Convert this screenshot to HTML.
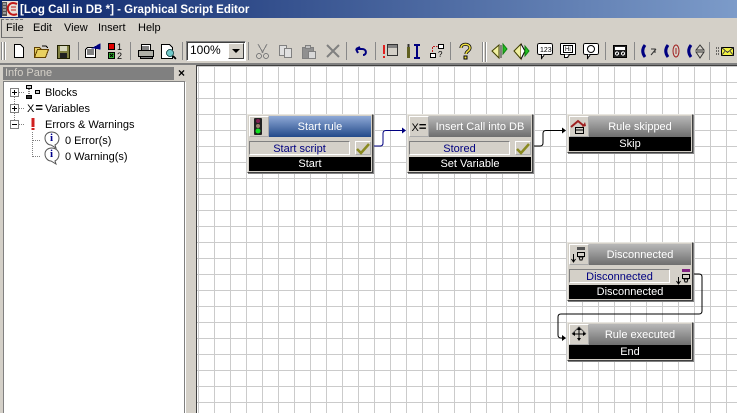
<!DOCTYPE html>
<html><head><meta charset="utf-8"><style>
html,body{margin:0;padding:0}
body{width:737px;height:413px;overflow:hidden;position:relative;background:#d4d0c8;font-family:"Liberation Sans",sans-serif;font-size:11px;color:#000}
.a{position:absolute}
.t{position:absolute;white-space:nowrap;line-height:14px}
.node{position:absolute;width:124px;background:#d4d0c8;border:1px solid;border-color:#e8e6e0 #404040 #404040 #e8e6e0;box-shadow:1px 1px 0 #808080}
.ic{position:absolute;left:1px;top:1px;width:20px;height:21px;background:#d4d0c8;border:1px solid;border-color:#fff #aaa #aaa #fff;box-sizing:border-box}
.hd{position:absolute;left:21px;top:1px;width:102px;height:21px;color:#fff;text-align:center;line-height:22px;background:linear-gradient(#b8b8b8,#6e6e6e)}
.hd.b{background:linear-gradient(#8fa9d6,#234a8a)}
.in{position:absolute;left:1px;top:26px;height:14px;box-sizing:border-box;width:101px;background:#d4d0c8;border:1px solid;border-color:#808080 #fff #fff #808080;color:#000080;text-align:center;line-height:14px}
.ck{position:absolute;left:107px;top:26px;width:16px;height:14px;box-sizing:border-box;border:1px solid;border-color:#fff #aaa #aaa #fff}
.bk{position:absolute;left:1px;width:122px;height:14px;background:#000;color:#fff;text-align:center;line-height:15px}
svg{position:absolute;overflow:visible}
</style></head><body>
<div class="a" style="left:0;top:0;width:737px;height:18px;background:linear-gradient(90deg,#0a246a,#7c9bc9)"></div>
<svg style="left:2px;top:1px" width="16" height="16"><rect width="16" height="16" fill="#e8e0d8"/><rect x="0" y="1" width="5" height="14" fill="#555"/><path d="M1 3h3M1 6h3M1 9h3M1 12h3" stroke="#ddd"/><path d="M15 3C8 0 5 5 6 9c1 4 5 6 9 4" fill="none" stroke="#c01818" stroke-width="2"/><path d="M9 6h5M9 9h5" stroke="#c01818"/></svg>
<div class="t" style="left:20px;top:2px;color:#fff;font-weight:bold;font-size:11.5px;line-height:16px">[Log Call in DB *] - Graphical Script Editor</div>

<div class="t" style="left:6px;top:21px">File</div>
<div class="t" style="left:33px;top:21px">Edit</div>
<div class="t" style="left:64px;top:21px">View</div>
<div class="t" style="left:98px;top:21px">Insert</div>
<div class="t" style="left:138px;top:21px">Help</div>
<div class="a" style="left:1px;top:19px;width:21px;height:17px;border-left:1px solid #666;border-top:1px dashed #777;border-bottom:1px solid #777;border-right:0"></div>

<svg style="left:0;top:40px" width="737" height="24" fill="none" stroke="#000" shape-rendering="crispEdges">
<g stroke="#888"><path d="M1.500 2v18M4.500 2v18M78.500 2v18M130.500 2v18M182.500 2v18M248.500 2v18M346.500 2v18M375.500 2v18M450.500 2v18M605.500 2v18M634.500 2v18M709.500 2v18"/></g>
<path d="M2.500 2v18M5.500 2v18" stroke="#fff"/>
<path d="M482.500 2v20M485.500 2v20" stroke="#888"/>
<path d="M483.500 2v20M486.500 2v20" stroke="#fff"/>
<!-- new -->
<path d="M14.500 4.500h6l3 3v10h-9z" fill="#fff"/>
<!-- open -->
<path d="M34.500 17.500l3-8h11l-3 8zM34.500 17.500V7.500h5l2 2" fill="#e8d060" stroke="#604000"/><path d="M42 6h4l2 2" stroke="#000"/>
<!-- save -->
<rect x="57.500" y="5.500" width="12" height="13" fill="#808040" stroke="#202000"/><rect x="60" y="6" width="7" height="5" fill="#d8d8c0" stroke="none"/><rect x="60" y="13" width="7" height="5" fill="#202020" stroke="none"/>
<!-- props -->
<path d="M87.500 7.500h8v10h-10v-8z" fill="#fff"/><path d="M87 10h7M87 12h7M87 14h7"/><path d="M93 8l7-4v5z" fill="#000080" stroke="#000080"/>
<!-- 1 2 -->
<rect x="108.500" y="3.500" width="6" height="6" fill="#e00000"/><rect x="108.500" y="12.500" width="6" height="6" fill="#30b030"/><path d="M110 14l3 3M113 14l-3 3"/>
<text x="117" y="10" font-size="9" fill="#000" stroke="none" font-family="Liberation Sans">1</text>
<text x="117" y="19" font-size="9" fill="#000" stroke="none" font-family="Liberation Sans">2</text>
<!-- print -->
<path d="M138.500 10.500h15v6h-15z" fill="#b0b0a8"/><path d="M141.500 4.500h9v6h-9z" fill="#fff"/><path d="M140.500 16.500h12v2h-12z" fill="#808080"/><path d="M142 7h7M142 9h7"/>
<!-- preview -->
<path d="M161.500 4.500h8l3 3v11h-11z" fill="#fff"/>
<circle cx="170" cy="13" r="3.500" fill="#70c8c8" stroke="#306060"/><path d="M173 16l3 3" stroke-width="2"/>
<!-- cut etc -->
<g stroke="#808080">
<path d="M258 4l5 9M267 4l-5 9"/><circle cx="259" cy="16" r="2.500"/><circle cx="266" cy="16" r="2.500"/>
<path d="M279.500 5.500h7v10h-7z" fill="#e0e0e0"/><path d="M284.500 8.500h7v9h-7z" fill="#e0e0e0"/>
<path d="M302.500 7.500h11v11h-11z" fill="#909090"/><path d="M305.500 5.500h5v3h-5z" fill="#c0c0c0"/><path d="M308.500 11.500h7v7h-7z" fill="#d8d8d8"/>
</g>
<path d="M327 5l12 12M339 5l-12 12" stroke="#808080" stroke-width="2" shape-rendering="auto"/>
<path d="M356 9h6c5 0 5 6 1 6M356 9l4-2M356 9l2 4" stroke="#000080" stroke-width="2" shape-rendering="auto"/>
<!-- red ! window -->
<rect x="387.500" y="4.500" width="10" height="11" fill="#d4d0c8" stroke="#333"/><rect x="388" y="5" width="9" height="3" fill="#808080" stroke="none"/>
<path d="M384 5v9M384 16v2" stroke="#e02020" stroke-width="2"/>
<!-- tools -->
<path d="M408.500 7v11" stroke="#606020" stroke-width="3"/><path d="M408.500 4v3" stroke="#333" stroke-width="2"/><path d="M417 4v15" stroke="#000080" stroke-width="2"/><path d="M414 5h6M414 18h6" stroke="#000080" stroke-width="2"/>
<!-- tree ? -->
<rect x="438.500" y="4.500" width="5" height="4" fill="#fff"/><rect x="430.500" y="13.500" width="5" height="4" fill="#fff"/><path d="M432.500 12V6.500h5" stroke="#c02020" stroke-dasharray="2 1"/>
<text x="438" y="17" font-size="8" fill="#000" stroke="none" font-family="Liberation Sans">?</text>
<!-- help -->
<path d="M461 8c0-5 9-5 9 0 0 3-4 3-4 6" stroke="#000" stroke-width="3" shape-rendering="auto"/><path d="M461 8c0-5 9-5 9 0 0 3-4 3-4 6" stroke="#f0e040" stroke-width="1.500" shape-rendering="auto"/><rect x="464" y="16" width="3" height="3" fill="#f0e040"/>
<!-- diamonds -->
<g shape-rendering="auto">
<path d="M492 11l7-6v13z" fill="#f0f0a0" stroke="#404000"/><path d="M503 4l4 5-4 5z" fill="#20c020" stroke="#108010"/><path d="M501 5v13" stroke="#333"/>
<path d="M514 11l7-7v15z" fill="#f0f0a0" stroke="#404000"/><path d="M521 4l4 7-4 8" fill="#fff"/><path d="M525 6l4 5-4 5z" fill="#20c020" stroke="#108010"/>
</g>
<g fill="#fff">
<rect x="537.500" y="3.500" width="15" height="11" rx="2"/><path d="M541.500 14.500v4l3-4"/>
<rect x="560.500" y="3.500" width="15" height="11" rx="1"/><path d="M564.500 14.500v3h3l2-3"/><rect x="563.500" y="5.500" width="9" height="7"/>
<rect x="583.500" y="3.500" width="15" height="11" rx="2"/><path d="M587.500 14.500v4l3-4"/><circle cx="591" cy="9" r="3.500" shape-rendering="auto"/>
</g>
<text x="540" y="12" font-size="7" fill="#000" stroke="none" font-family="Liberation Sans">123</text>
<text x="565" y="11" font-size="6" fill="#000" stroke="none" font-family="Liberation Sans">Hi</text>
<!-- tape -->
<rect x="613.500" y="5.500" width="13" height="12" fill="#222"/><rect x="615" y="7" width="10" height="3" fill="#fff" stroke="none"/><circle cx="617" cy="13.500" r="1.500" stroke="#fff"/><circle cx="623" cy="13.500" r="1.500" stroke="#fff"/>
<!-- phones -->
<g shape-rendering="auto">
<path d="M645 5c-3 4-3 8 0 12" stroke="#000080" stroke-width="3"/><path d="M651 15l5-6M651 9h4v4" stroke="#333"/>
<path d="M668 5c-3 4-3 8 0 12" stroke="#000080" stroke-width="3"/><ellipse cx="676" cy="11" rx="3" ry="6" stroke="#a02020"/><path d="M676 8v6" stroke="#a02020"/>
<path d="M691 5c-3 4-3 8 0 12" stroke="#000080" stroke-width="3"/><path d="M696 10l4-5 4 5zM696 12l4 6 4-6z" stroke="#333"/>
</g>
<!-- mail -->
<rect x="721.500" y="7.500" width="12" height="8" fill="#f0f040"/><path d="M721.500 7.500l6 5 6-5M721.500 15.500l4-5M733.500 15.500l-4-5" stroke="#444"/><path d="M716 8h4M716 11h4M716 14h4" stroke-dasharray="1 1"/>
</svg>
<!-- combo -->
<div class="a" style="left:186px;top:41px;width:60px;height:20px;background:#fff;box-sizing:border-box;border:1px solid;border-color:#808080 #fff #fff #808080;box-shadow:inset 1px 1px 0 #404040;font-size:12px;line-height:17px;padding-left:3px">100%</div>
<div class="a" style="left:228px;top:43px;width:16px;height:16px;background:#d4d0c8;box-sizing:border-box;border:1px solid;border-color:#fff #404040 #404040 #fff"></div>
<div class="a" style="left:232px;top:49px;width:0;height:0;border:4px solid transparent;border-top:4px solid #000;border-bottom:0"></div>

<div class="a" style="left:0;top:63px;width:737px;height:2px;background:#808080"></div>

<!-- Info pane -->
<div class="a" style="left:3px;top:67px;width:171px;height:13px;background:#808080"></div>
<div class="t" style="left:5px;top:66px;color:#d4d0c8">Info Pane</div>
<div class="t" style="left:178px;top:66px;font-weight:bold;font-size:12px">×</div>
<div class="a" style="left:3px;top:81px;width:182px;height:332px;background:#fff;border-left:1px solid #808080;border-top:1px solid #808080;border-right:1px solid #808080;box-sizing:border-box"></div>
<svg style="left:0;top:0" width="190" height="180" fill="none" shape-rendering="crispEdges">
<path d="M14.500 97v24M19 92.500h6M19 108.500h6M19 124.500h6M32.500 132v25M33 140.500h8M33 156.500h8" stroke="#808080" stroke-dasharray="1 1"/>
<g fill="#fff" stroke="#808080"><rect x="10.500" y="88.500" width="8" height="8"/><rect x="10.500" y="104.500" width="8" height="8"/><rect x="10.500" y="120.500" width="8" height="8"/></g>
<path d="M12 92.500h5M14.500 90v5M12 108.500h5M14.500 106v5M12 124.500h5" stroke="#000"/>
<g stroke="#000"><rect x="26.500" y="85.500" width="5" height="3" fill="#ccc"/><rect x="26.500" y="95.500" width="5" height="3" fill="#333"/><rect x="35.500" y="90.500" width="4" height="3" fill="#ccc"/><path d="M29 89v6" stroke-dasharray="1 1"/></g>
<path d="M33 118v9M33 128v2" stroke="#d02020" stroke-width="3"/>
<g shape-rendering="auto">
<path d="M45 138c0-8 13-8 14 0 0 4-2 6-4 7l1 3-5-3c-3 0-6-3-6-7z" fill="#fff" stroke="#555"/>
<path d="M45 154c0-8 13-8 14 0 0 4-2 6-4 7l1 3-5-3c-3 0-6-3-6-7z" fill="#fff" stroke="#555"/></g>
</svg>
<div class="t" style="left:27px;top:101px;font-size:11px;line-height:14px">X<b style="font-size:13px;margin-left:1px">=</b></div>
<div class="t" style="left:50px;top:131px;font-size:11px;font-weight:bold;color:#00008b;font-family:'Liberation Serif',serif">i</div>
<div class="t" style="left:50px;top:147px;font-size:11px;font-weight:bold;color:#00008b;font-family:'Liberation Serif',serif">i</div>
<div class="t" style="left:45px;top:86px">Blocks</div>
<div class="t" style="left:45px;top:102px">Variables</div>
<div class="t" style="left:45px;top:118px">Errors &amp; Warnings</div>
<div class="t" style="left:65px;top:134px">0 Error(s)</div>
<div class="t" style="left:65px;top:150px">0 Warning(s)</div>

<!-- Canvas -->
<div class="a" style="left:185px;top:82px;width:1px;height:331px;background:#fff"></div>
<div class="a" style="left:196px;top:65px;width:1px;height:348px;background:#404040"></div>
<div class="a" style="left:197px;top:65px;width:540px;height:1px;background:#404040"></div>
<div class="a" style="left:197px;top:66px;width:540px;height:347px;background-color:#fff;background-image:linear-gradient(90deg,transparent 15px,#cbcbcb 15px),linear-gradient(transparent 15px,#cbcbcb 15px);background-size:16px 16px;background-position:2px 1px"></div>

<div class="node" style="left:247px;top:114px;height:57px">
<div class="ic"><svg style="left:3px;top:1px" width="11" height="17"><rect x="1" y="0" width="8" height="17" rx="1" fill="#222"/><circle cx="5" cy="3" r="2" fill="#802050"/><circle cx="5" cy="8" r="2" fill="#a08070"/><circle cx="5" cy="13" r="2.500" fill="#10e020"/></svg></div>
<div class="hd b">Start rule</div><div class="in">Start script</div>
<div class="ck"><svg style="left:0;top:-1px" width="14" height="14"><path d="M1 8l4 4 8-9" fill="none" stroke="#8a8a20" stroke-width="2.500"/></svg></div>
<div class="bk" style="top:42px">Start</div></div>

<div class="node" style="left:407px;top:114px;height:57px">
<div class="ic" style="font-size:11px;line-height:19px;text-align:center">X<b style="font-size:13px">=</b></div>
<div class="hd">Insert Call into DB</div><div class="in">Stored</div>
<div class="ck"><svg style="left:0;top:-1px" width="14" height="14"><path d="M1 8l4 4 8-9" fill="none" stroke="#8a8a20" stroke-width="2.500"/></svg></div>
<div class="bk" style="top:42px">Set Variable</div></div>

<div class="node" style="left:567px;top:114px;height:37px">
<div class="ic"><svg style="left:0;top:1px" width="17" height="16"><path d="M1 9l7-6 6 5" fill="none" stroke="#a02020" stroke-width="2"/><path d="M12 9l4-1-1-4z" fill="#a02020"/><rect x="5.500" y="9.500" width="8" height="6" fill="#d4d0c8" stroke="#000"/><path d="M5 12h9" stroke="#000"/></svg></div>
<div class="hd">Rule skipped</div><div class="bk" style="top:22px">Skip</div></div>

<div class="node" style="left:567px;top:242px;height:57px">
<div class="ic"><svg style="left:0;top:1px" width="17" height="17"><path d="M3.500 8v7M1.500 13l2 3 2-3" fill="none" stroke="#000"/><rect x="7" y="1" width="8" height="3" fill="#555"/><path d="M7.500 6.500h7v4h-7zM9 11h4l-1 3h-2z" fill="#d4d0c8" stroke="#000"/></svg></div>
<div class="hd">Disconnected</div><div class="in">Disconnected</div>
<div class="ck" style="border:0"><svg width="16" height="15"><path d="M3.500 8v6M1.500 12l2 3 2-3" fill="none" stroke="#000"/><rect x="7" y="0" width="8" height="3" fill="#802080"/><path d="M7.500 5.500h7v4h-7zM9 10h4l-1 3h-2z" fill="#d4d0c8" stroke="#000"/></svg></div>
<div class="bk" style="top:42px">Disconnected</div></div>

<div class="node" style="left:567px;top:322px;height:37px">
<div class="ic"><svg style="left:0;top:0" width="17" height="18"><path d="M2 9l7-7 7 7" fill="none" stroke="#555"/><path d="M9 4v10M4 9h10" stroke="#000"/><path d="M9 2l-2 3h4zM9 16l-2-3h4zM2 9l3-2v4zM16 9l-3-2v4z" fill="#000"/></svg></div>
<div class="hd">Rule executed</div><div class="bk" style="top:22px">End</div></div>

<svg style="left:0;top:0" width="737" height="413" fill="none">
<path d="M374 146h6q3 0 3-3v-9.500q0-3 3-3h17" stroke="#000080"/><path d="M406 130.500l-4-3v6z" fill="#000080"/>
<path d="M534 146h6q3 0 3-3v-9.500q0-3 3-3h17" stroke="#000"/><path d="M566 130.500l-4-3v6z" fill="#000"/>
<path d="M694 274h5q3 0 3 3v34q0 3-3 3H561q-3 0-3 3v18q0 3 3 3h2" stroke="#000"/><path d="M566 338l-4-3v6z" fill="#000"/>
</svg>
</body></html>
